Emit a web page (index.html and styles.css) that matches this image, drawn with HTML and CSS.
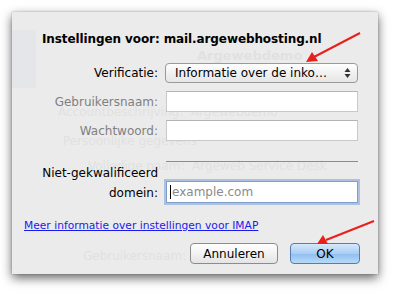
FILE: index.html
```html
<!DOCTYPE html>
<html lang="nl">

<head>
    <meta charset="UTF-8">
    <title>Instellingen voor IMAP</title>
    <link rel="stylesheet" href="styles.css">
</head>

<body>
    <div class="sheet">
        <!-- venster erachter, schemert door het paneel heen -->
        <div class="ghost" aria-hidden="true">
            <div class="ghost-side"></div>
            <div class="ghost-lines">
                <p class="g1"><b>Argewebdemo</b></p>
                <p class="g2">Accountbeschrijving:&nbsp;&nbsp;Argewebdemo</p>
                <p class="g3">Persoonlijke gegevens</p>
                <p class="g4">Volledige naam:&nbsp;&nbsp;Argeweb Service Desk</p>
                <p class="g5">Gebruikersnaam:</p>
            </div>
        </div>

        <div class="content">
            <h1 class="title">Instellingen voor: mail.argewebhosting.nl</h1>

            <div class="row row-auth">
                <label class="label">Verificatie:</label>
                <div class="popup">
                    <span class="popup-text">Informatie over de inko…</span>
                    <svg class="updown" width="7" height="12" viewBox="0 0 7 12">
                        <path d="M3.5 1 L6.5 5 L0.5 5 Z" fill="#333" />
                        <path d="M3.5 11 L6.5 7 L0.5 7 Z" fill="#333" />
                    </svg>
                </div>
            </div>

            <div class="row row-user">
                <label class="label dim">Gebruikersnaam:</label>
                <div class="field"></div>
            </div>

            <div class="row row-pass">
                <label class="label dim">Wachtwoord:</label>
                <div class="field"></div>
            </div>

            <div class="rule"></div>

            <div class="row row-domain">
                <label class="label label-two">Niet-gekwalificeerd<br>domein:</label>
                <div class="field field-focus">
                    <span class="caret"></span><span class="placeholder">example.com</span>
                </div>
            </div>

            <a class="more" href="#">Meer informatie over instellingen voor IMAP</a>

            <div class="buttons">
                <button class="btn">Annuleren</button>
                <button class="btn btn-ok">OK</button>
            </div>
        </div>
    </div>

    <!-- rode pijlen van de schermafdruk -->
    <svg class="arrows" width="398" height="296" viewBox="0 0 398 296">
        <line x1="360" y1="33" x2="314" y2="57" stroke="#e8201c" stroke-width="2" />
        <path d="M306 62 L312 52 L318 61 Z" fill="#e8201c" />
        <line x1="374" y1="221" x2="326" y2="240" stroke="#e8201c" stroke-width="2" />
        <path d="M317 244 L323 235 L328 244 Z" fill="#e8201c" />
    </svg>
</body>

</html>
```

FILE: styles.css
```css
* {
    margin: 0;
    padding: 0;
    box-sizing: border-box;
}

body {
    width: 398px;
    height: 296px;
    padding: 12px;
    background: #fff;
    font-family: "DejaVu Sans", "Liberation Sans", sans-serif;
    font-size: 12px;
    color: #000;
    overflow: hidden;
}

.sheet {
    display: grid;
    width: 366px;
    height: 262px;
    background: #ebebeb;
    box-shadow: 0 4px 10px rgba(0, 0, 0, 0.6), 0 0 2px rgba(0, 0, 0, 0.25);
}

.ghost,
.content {
    grid-area: 1 / 1;
}

/* doorschijnend venster */
.ghost {
    display: flex;
    color: #e1e1e1;
    font-size: 12px;
    line-height: 14px;
}

.ghost-side {
    width: 24px;
    height: 58px;
    margin-top: 18px;
    background: #e4e6ea;
}

.ghost-lines p {
    height: 14px;
    white-space: nowrap;
}

.g1 { margin: 37px 0 0 161px; font-size: 13px; }
.g2 { margin: 42px 0 0 22px; }
.g3 { margin: 15px 0 0 27px; }
.g4 { margin: 11px 0 0 52px; }
.g5 { margin: 76px 0 0 47px; }

.content {
    position: relative;
    display: flex;
    flex-direction: column;
}

.title {
    padding: 18px 0 0 30px;
    font-size: 12px;
    font-weight: bold;
    line-height: 18px;
    letter-spacing: -0.1px;
}

.row {
    display: flex;
    align-items: center;
}

.label {
    width: 146px;
    margin-right: 8px;
    text-align: right;
    line-height: 20px;
    white-space: nowrap;
}

.label.dim {
    color: #808080;
}

.row-auth {
    margin-top: 15px;
    height: 20px;
}

.popup {
    display: flex;
    align-items: center;
    justify-content: space-between;
    width: 193px;
    height: 20px;
    margin-left: -1px;
    padding: 0 6px 0 9px;
    border: 1px solid #9a9a9a;
    border-radius: 4px;
    background: linear-gradient(#ffffff, #f1f1f1 50%, #e6e6e6);
}

.popup-text {
    line-height: 18px;
}

.row-user {
    margin-top: 8px;
}

.row-pass {
    margin-top: 8px;
}

.field {
    width: 192px;
    height: 21px;
    background: #fff;
    border: 1px solid #c9c9c9;
    border-top-color: #b4b4b4;
}

.rule {
    width: 192px;
    height: 1px;
    margin: 20px 0 0 154px;
    background: #8c8c8c;
}

.row-domain {
    margin-top: 1px;
    align-items: flex-end;
}

.field-focus {
    display: flex;
    align-items: center;
    height: 22px;
    padding-left: 3px;
    border-color: #7d9fcc;
    box-shadow: 0 0 0 2px rgba(120, 160, 215, 0.55);
}

.caret {
    width: 1px;
    height: 14px;
    background: #000;
}

.placeholder {
    color: #8a8a8a;
    font-size: 12px;
    padding-left: 1px;
}

.more {
    align-self: flex-start;
    margin: 16px 0 0 12px;
    font-size: 10.7px;
    line-height: 14px;
    color: #1a1aee;
    text-decoration: underline;
}

.buttons {
    display: flex;
    justify-content: flex-end;
    gap: 12px;
    margin: 10px 18px 0 0;
}

.btn {
    width: 88px;
    height: 21px;
    border: 1px solid #8c8c8c;
    border-radius: 4px;
    background: linear-gradient(#ffffff, #f2f2f2 50%, #e4e4e4);
    font-family: "DejaVu Sans", "Liberation Sans", sans-serif;
    font-size: 12px;
    color: #000;
}

.btn-ok {
    width: 70px;
    border-color: #5a7bac;
    background: linear-gradient(#d6e8fb, #a9cdf4 50%, #8fbdf0 51%, #b7daf8);
}

.arrows {
    position: absolute;
    left: 0;
    top: 0;
    pointer-events: none;
}
```
